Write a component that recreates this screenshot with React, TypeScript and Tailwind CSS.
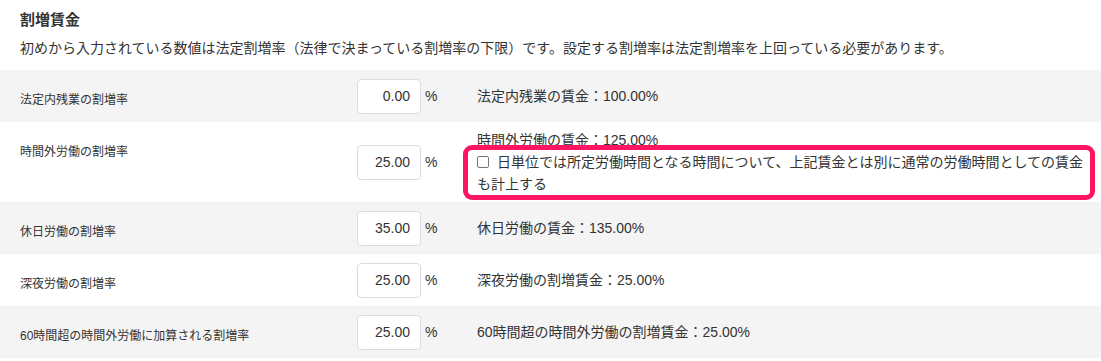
import React from "react";

type Rate = {
  label: string;
  value: string;
  result: string;
  note?: string;
};

const rates: Rate[] = [
  { label: "法定内残業の割増率", value: "0.00", result: "法定内残業の賃金：100.00%" },
  {
    label: "時間外労働の割増率",
    value: "25.00",
    result: "時間外労働の賃金：125.00%",
    note: "日単位では所定労働時間となる時間について、上記賃金とは別に通常の労働時間としての賃金も計上する",
  },
  { label: "休日労働の割増率", value: "35.00", result: "休日労働の賃金：135.00%" },
  { label: "深夜労働の割増率", value: "25.00", result: "深夜労働の割増賃金：25.00%" },
  {
    label: "60時間超の時間外労働に加算される割増率",
    value: "25.00",
    result: "60時間超の時間外労働の割増賃金：25.00%",
  },
];

function RateRow({ rate, shaded }: { rate: Rate; shaded: boolean }) {
  return (
    <div
      className={`flex items-center min-h-[52px] py-[7px] pl-5 ${
        shaded ? "bg-[#f5f4f4]" : "bg-white"
      }`}
    >
      <div className="w-[337px] self-start pt-[15px] text-[12px] leading-4 text-[#333]">
        {rate.label}
      </div>
      <input
        readOnly
        value={rate.value}
        className="w-[64px] h-[35px] rounded-[4px] border border-[#dcdcdc] bg-white pr-[10px] text-right text-[14px] text-[#333] outline-none"
      />
      <span className="ml-1 w-[52px] text-[14px] text-[#333]">%</span>
      <div className="w-[608px] text-[14px] leading-[22px] text-[#333]">
        <div>{rate.result}</div>
        {rate.note && (
          <div className="relative">
            <label className="block">
              <span className="mr-2 inline-block h-[12px] w-[12px] rounded-[2px] border border-[#777] bg-white align-[-1px]" />
              {rate.note}
            </label>
            <div className="pointer-events-none absolute -top-[6px] -bottom-[5px] -left-[14px] -right-[10px] rounded-[9px] shadow-[inset_0_0_0_5px_#fe1562]" />
          </div>
        )}
      </div>
    </div>
  );
}

export default function App() {
  return (
    <div
      className="w-[1101px] bg-white text-[#333]"
      style={{ fontFamily: "'Liberation Sans', 'Noto Sans CJK JP', sans-serif" }}
    >
      <div className="px-5 pt-[10px]">
        <h2 className="text-[15px] font-bold leading-5">割増賃金</h2>
        <p className="mt-2 text-[14px] leading-5">
          初めから入力されている数値は法定割増率（法律で決まっている割増率の下限）です。設定する割増率は法定割増率を上回っている必要があります。
        </p>
      </div>
      <div className="mt-3">
        {rates.map((r, i) => (
          <RateRow key={r.label} rate={r} shaded={i % 2 === 0} />
        ))}
      </div>
    </div>
  );
}
